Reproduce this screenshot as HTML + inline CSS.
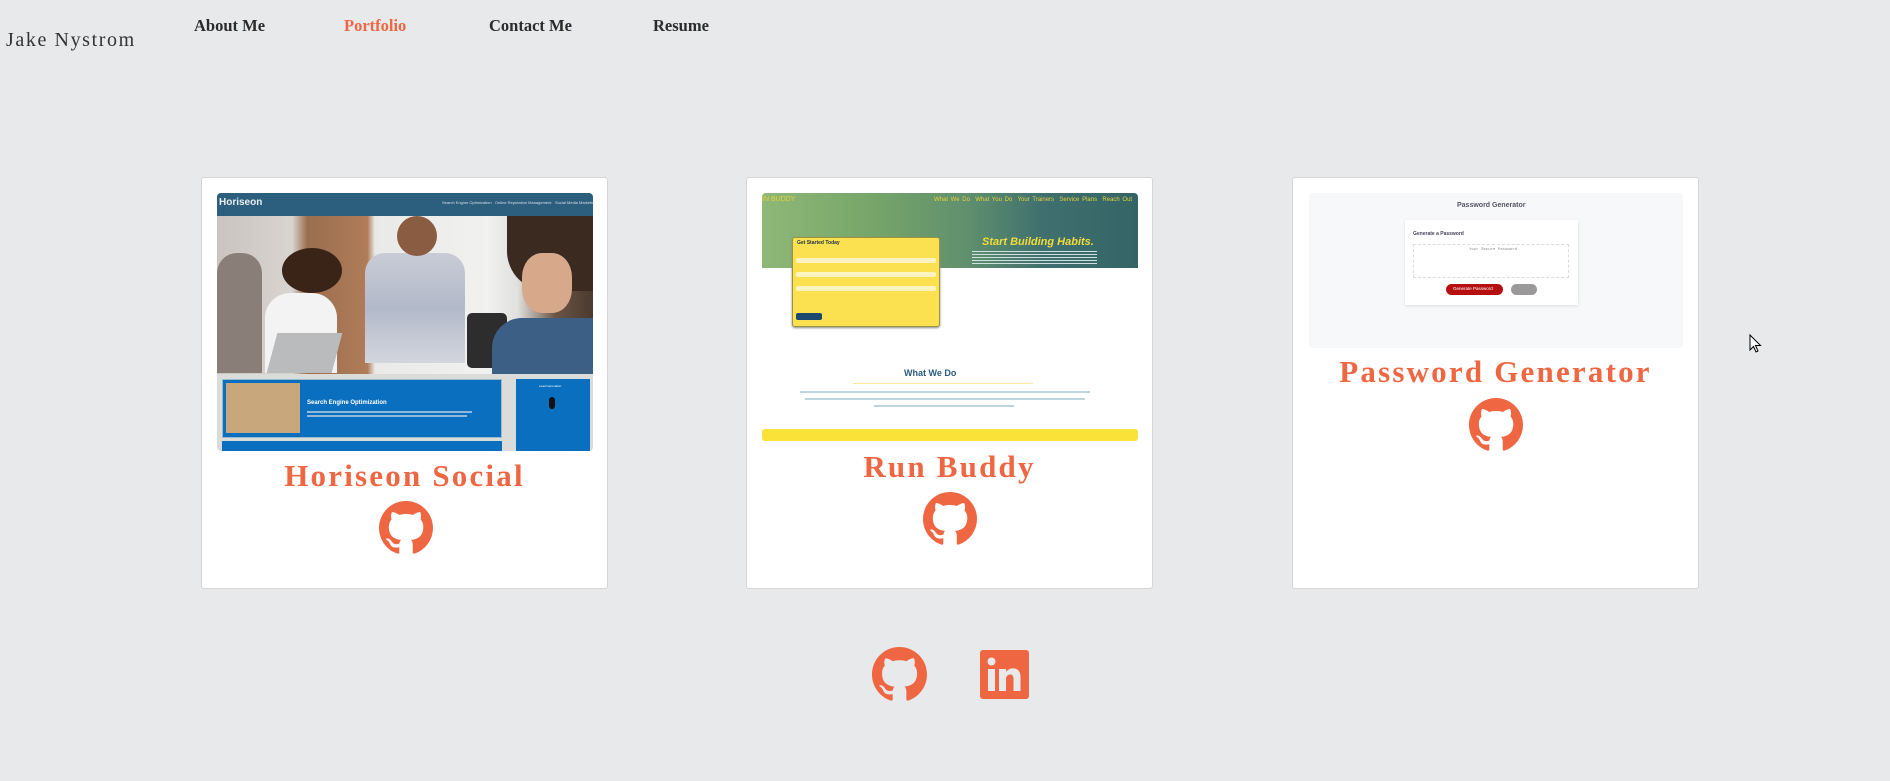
<!DOCTYPE html>
<html><head><meta charset="utf-8">
<style>
*{margin:0;padding:0;box-sizing:border-box}
html,body{width:1890px;height:781px;overflow:hidden;background:#e8e9eb;font-family:"Liberation Serif",serif;position:relative}
.abs{position:absolute}
.name{left:6px;top:29px;font-size:20px;color:#333;letter-spacing:1.6px;font-weight:normal}
.nav{top:16px;font-size:16.5px;font-weight:bold;color:#2b2b2b}
.card{background:#fff;border:1px solid #d6d6d6;border-radius:3px;width:407px;height:412px;top:177px}
.title{position:absolute;left:0;width:100%;text-align:center;font-weight:bold;font-size:31px;letter-spacing:2.2px;color:#ef6642}
.gh{position:absolute;width:54px;height:54px}
.img{position:absolute;overflow:hidden;border-radius:4px}
.t{position:absolute;font-family:"Liberation Sans",sans-serif;white-space:nowrap}
</style></head><body>
<div class="abs name">Jake Nystrom</div>
<div class="abs nav" style="left:194px">About Me</div>
<div class="abs nav" style="left:344px;color:#ef6642">Portfolio</div>
<div class="abs nav" style="left:489px">Contact Me</div>
<div class="abs nav" style="left:653px">Resume</div>

<svg width="0" height="0" style="position:absolute"><defs>
<symbol id="ghs" viewBox="0 0 16 16"><path fill="#ef6642" d="M8 0C3.58 0 0 3.58 0 8c0 3.54 2.29 6.53 5.47 7.59.4.07.55-.17.55-.38 0-.19-.01-.82-.01-1.49-2.01.37-2.53-.49-2.69-.94-.09-.23-.48-.94-.82-1.13-.28-.15-.68-.52-.01-.53.63-.01 1.08.58 1.230.82.72 1.21 1.87.87 2.33.66.07-.52.28-.87.51-1.07-1.78-.2-3.64-.89-3.64-3.95 0-.87.31-1.59.82-2.15-.08-.2-.36-1.02.08-2.12 0 0 .67-.21 2.2.82.64-.18 1.32-.27 2-.27.68 0 1.36.09 2 .27 1.53-1.04 2.2-.82 2.2-.82.44 1.1.16 1.92.08 2.12.51.56.82 1.27.82 2.15 0 3.07-1.87 3.75-3.65 3.95.29.25.54.73.54 1.48 0 1.07-.01 1.93-.01 2.2 0 .21.15.46.55.38A8.013 8.013 0 0016 8c0-4.42-3.58-8-8-8z"/></symbol>
</defs></svg>

<!-- Card 1 -->
<div class="abs card" style="left:201px">
  <div class="img" style="left:15px;top:15px;width:376px;height:258px;background:#d9dcd8">
    <div class="abs" style="left:0;top:0;width:376px;height:23px;background:#2b5f7d"></div>
    <div class="t" style="left:2px;top:4px;font-size:10px;font-weight:bold;color:#e8eef2">Horiseon</div>
    <div class="t" style="left:225px;top:7px;font-size:4px;color:#dde">Search Engine Optimization</div>
    <div class="t" style="left:278px;top:7px;font-size:4px;color:#dde">Online Reputation Management</div>
    <div class="t" style="left:338px;top:7px;font-size:4px;color:#dde">Social Media Marketing</div>
    <div class="abs" style="left:0;top:23px;width:376px;height:158px;background:linear-gradient(90deg,#c9c4bf 0%,#d8d4d0 20%,#9a6e50 24%,#b07c58 40%,#e9e9e7 42%,#f1f1ef 72%,#e0e0de 80%,#6b5444 90%,#4a3a30 100%)"></div>
    <div class="abs" style="left:0;top:60px;width:45px;height:120px;background:#8a7f78;border-radius:20px 20px 0 0"></div>
    <div class="abs" style="left:48px;top:100px;width:72px;height:80px;background:#f3f3f3;border-radius:25px 25px 0 0"></div>
    <div class="abs" style="left:65px;top:55px;width:60px;height:45px;background:#3a2418;border-radius:50%"></div>
    <div class="abs" style="left:148px;top:60px;width:100px;height:110px;background:linear-gradient(#c9ccd6,#b2b9c9 50%,#d4d6de);border-radius:20px 20px 0 0"></div>
    <div class="abs" style="left:180px;top:23px;width:40px;height:40px;background:#8a5c42;border-radius:50%"></div>
    <div class="abs" style="left:55px;top:140px;width:65px;height:40px;background:#b9bbbd;transform:skewX(-15deg)"></div>
    <div class="abs" style="left:250px;top:120px;width:40px;height:55px;background:#2d2d2d;border-radius:5px"></div>
    <div class="abs" style="left:290px;top:23px;width:86px;height:75px;background:#3a2a20;border-radius:0 0 0 40px"></div>
    <div class="abs" style="left:305px;top:60px;width:50px;height:60px;background:#d7a88a;border-radius:40%"></div>
    <div class="abs" style="left:275px;top:125px;width:101px;height:56px;background:#3c5f86;border-radius:30px 0 0 0"></div>
    <div class="abs" style="left:5px;top:186px;width:280px;height:59px;background:#0b6fbf;border:1px solid #9bc"></div>
    <div class="abs" style="left:9px;top:190px;width:74px;height:50px;background:#c8a77d"></div>
    <div class="t" style="left:90px;top:207px;font-size:6px;font-weight:bold;color:#fff">Search Engine Optimization</div>
    <div class="abs" style="left:90px;top:218px;width:165px;height:2px;background:#8fb8dd"></div>
    <div class="abs" style="left:90px;top:222px;width:160px;height:2px;background:#8fb8dd"></div>
    <div class="abs" style="left:5px;top:248px;width:280px;height:12px;background:#0b6fbf"></div>
    <div class="abs" style="left:299px;top:186px;width:74px;height:75px;background:#0b6fbf"></div>
    <div class="t" style="left:322px;top:191px;font-size:3px;color:#fff">Lead Generation</div>
    <div class="abs" style="left:332px;top:204px;width:6px;height:12px;background:#111;border-radius:3px"></div>
  </div>
  <div class="title" style="top:280px">Horiseon Social</div>
  <svg class="gh" style="left:177px;top:323px"><use href="#ghs"/></svg>
</div>

<!-- Card 2 -->
<div class="abs card" style="left:746px">
  <div class="img" style="left:15px;top:15px;width:376px;height:250px;background:#fff">
    <div class="abs" style="left:0;top:0;width:376px;height:75px;background:linear-gradient(90deg,#8fb877 0%,#76a56a 30%,#5f8f6e 55%,#3f6f6e 75%,#356466 100%)"></div>
    <div class="t" style="left:0;top:3px;font-size:7px;color:#e3d33a">IN BUDDY</div>
    <div class="t" style="left:172px;top:4px;font-size:6px;color:#e3d33a;word-spacing:1px">What We Do &nbsp;What You Do &nbsp;Your Trainers &nbsp;Service Plans &nbsp;Reach Out</div>
    <div class="t" style="left:220px;top:43px;font-size:11px;font-weight:bold;font-style:italic;color:#f1dc3a">Start Building Habits.</div>
    <div class="abs" style="left:210px;top:58px;width:125px;height:14px;background:repeating-linear-gradient(#cfe0e0 0 1px,transparent 1px 3px)"></div>
    <div class="abs" style="left:30px;top:44px;width:148px;height:90px;background:#fbe150;border:1px solid #9a9440;border-radius:3px;box-shadow:0 1px 2px #888"></div>
    <div class="t" style="left:35px;top:47px;font-size:5px;font-weight:bold;color:#234">Get Started Today</div>
    <div class="abs" style="left:34px;top:65px;width:140px;height:5px;background:#fdf3c0;border-radius:2px"></div>
    <div class="abs" style="left:34px;top:79px;width:140px;height:5px;background:#fdf3c0;border-radius:2px"></div>
    <div class="abs" style="left:34px;top:93px;width:140px;height:5px;background:#fdf3c0;border-radius:2px"></div>
    <div class="abs" style="left:34px;top:120px;width:26px;height:7px;background:#1b4a6e;border-radius:2px"></div>
    <div class="t" style="left:142px;top:175px;font-size:9px;font-weight:bold;color:#2a5a80">What We Do</div>
    <div class="abs" style="left:91px;top:190px;width:180px;height:1px;background:#fbeaa0"></div>
    <div class="abs" style="left:38px;top:198px;width:290px;height:2px;background:#bcd5e0"></div>
    <div class="abs" style="left:43px;top:205px;width:280px;height:2px;background:#bcd5e0"></div>
    <div class="abs" style="left:112px;top:212px;width:140px;height:2px;background:#bcd5e0"></div>
    <div class="abs" style="left:0;top:236px;width:376px;height:12px;background:#fbe238;border-radius:3px"></div>
  </div>
  <div class="title" style="top:271px">Run Buddy</div>
  <svg class="gh" style="left:176px;top:314px"><use href="#ghs"/></svg>
</div>

<!-- Card 3 -->
<div class="abs card" style="left:1292px">
  <div class="img" style="left:16px;top:15px;width:374px;height:155px;background:#f7f8fa">
    <div class="t" style="left:148px;top:9px;font-size:7px;font-weight:bold;color:#556">Password Generator</div>
    <div class="abs" style="left:96px;top:27px;width:173px;height:85px;background:#fff;box-shadow:0 1px 3px #ddd"></div>
    <div class="t" style="left:104px;top:38px;font-size:5px;font-weight:bold;color:#445">Generate a Password</div>
    <div class="abs" style="left:104px;top:51px;width:156px;height:34px;border:1px dashed #ddd"></div>
    <div class="t" style="left:160px;top:55px;font-size:4px;color:#888;font-family:'Liberation Mono',monospace">Your Secure Password</div>
    <div class="abs" style="left:137px;top:91px;width:57px;height:11px;background:#b50f0f;border-radius:6px"></div>
    <div class="t" style="left:144px;top:93px;font-size:4.5px;color:#fff">Generate Password</div>
    <div class="abs" style="left:202px;top:91px;width:26px;height:11px;background:#9a9898;border-radius:6px"></div>
  </div>
  <div class="title" style="top:176px">Password Generator</div>
  <svg class="gh" style="left:176px;top:220px"><use href="#ghs"/></svg>
</div>

<!-- cursor -->
<svg class="abs" style="left:1749px;top:334px" width="14" height="20" viewBox="0 0 14 20"><path d="M1 1 L1 16 L4.5 12.5 L7 18 L9 17 L6.5 11.5 L11.5 11.5 Z" fill="#fff" stroke="#000" stroke-width="1"/></svg>

<!-- footer -->
<svg class="abs" style="left:872px;top:647px" width="55" height="55"><use href="#ghs"/></svg>
<svg class="abs" style="left:980px;top:650px" width="49" height="49" viewBox="0 0 49 49">
<rect width="49" height="49" rx="3" fill="#ef6642"/>
<rect x="8" y="19" width="7" height="22" fill="#e8e9eb"/>
<circle cx="11.5" cy="11.5" r="4" fill="#e8e9eb"/>
<path d="M19 19h7v3c1.5-2.3 4-3.6 7-3.6 5 0 7.5 3 7.5 9V41h-7V29c0-3-1-4.5-3.5-4.5S26 26.5 26 29.5V41h-7z" fill="#e8e9eb"/>
</svg>
</body></html>
